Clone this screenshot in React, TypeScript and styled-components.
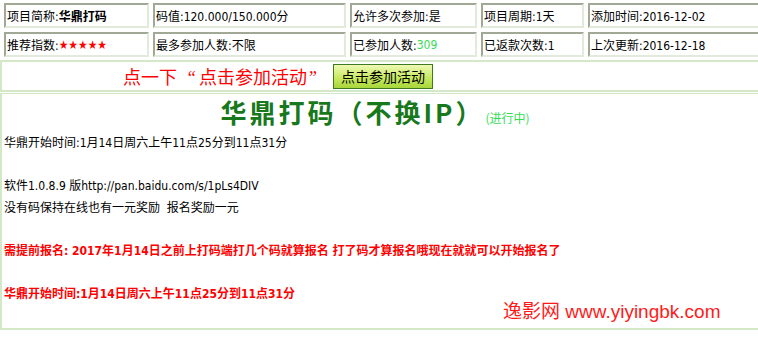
import React from 'react';
import styled, { createGlobalStyle } from 'styled-components';

const v = {
	font: '"DejaVu Sans Condensed", "Liberation Sans", "Noto Sans CJK SC", sans-serif',
	cjk: '"Noto Sans CJK SC", sans-serif',
	red: '#ff0000',
	darkGreen: '#17781c',
	lightGreen: '#33dd55',
	band: '#d3e8c6',
	cellDark: '#a1a996',
	cellLight: '#e2eadb',
};

const GlobalStyle = createGlobalStyle`
	html, body {
		margin: 0;
		padding: 0;
		background: #fff;
		overflow: hidden;
	}
	body {
		font-family: ${v.font};
		font-size: 12px;
		color: #000;
	}
`;

const Page = styled.div`
	position: relative;
	width: 780px;
	height: 338px;
`;

const InfoGrid = styled.div`
	display: grid;
	grid-template-columns: 145px 193px 127px 103px 1fr;
	grid-auto-rows: 25px;
	gap: 4px;
	padding: 3px 0 3px 4px;
	border-bottom: 2px solid ${v.band};
`;

const Cell = styled.div`
	box-sizing: border-box;
	border-top: 2px solid ${v.cellDark};
	border-left: 2px solid ${v.cellDark};
	border-right: 2px solid ${v.cellLight};
	border-bottom: 2px solid ${v.cellLight};
	padding-left: 1px;
	display: flex;
	align-items: center;
	white-space: nowrap;
	overflow: hidden;
`;

const Strong = styled.b`
	font-weight: bold;
`;

const Colored = styled.span<{ $color: string }>`
	color: ${(p) => p.$color};
`;

const ActionRow = styled.div`
	display: flex;
	align-items: center;
	gap: 18px;
	height: 28px;
	padding-left: 121px;
	border-left: 2px solid ${v.band};
	border-bottom: 2px solid ${v.band};
`;

const Prompt = styled.span`
	font-family: ${v.cjk};
	font-size: 18px;
	color: ${v.red};
	white-space: nowrap;
`;

// the quote marks sit in full-width slots, open one pushed right, close one left
const Quote = styled.span<{ $open?: boolean }>`
	display: inline-block;
	width: ${(p) => (p.$open ? '22px' : '8px')};
	text-align: ${(p) => (p.$open ? 'right' : 'left')};
	padding-right: ${(p) => (p.$open ? '3px' : '0')};
	box-sizing: border-box;
	font-family: "Liberation Serif", serif;
	font-style: italic;
`;

const JoinButton = styled.button`
	height: 25px;
	padding: 0 7px;
	font-family: ${v.cjk};
	font-size: 14px;
	color: #000;
	border: 1px solid #3d7a20;
	background: linear-gradient(#eff9b4, #c4e85c 60%, #a8d63a);
	cursor: pointer;
`;

const Content = styled.div`
	margin-top: 1px;
	height: 234px;
	border-top: 1px solid ${v.band};
	border-left: 2px solid ${v.band};
	border-bottom: 2px solid ${v.band};
	padding-left: 2px;
`;

const TitleLine = styled.div`
	display: flex;
	justify-content: center;
	align-items: baseline;
	gap: 1px;
	height: 39px;
	line-height: 36px;
	padding-right: 34px;
`;

const Title = styled.h1`
	margin: 0;
	font-family: ${v.cjk};
	font-size: 26px;
	font-weight: bold;
	letter-spacing: 3px;
	color: ${v.darkGreen};
`;

const Status = styled.span`
	font-family: ${v.cjk};
	font-size: 12px;
	color: ${v.lightGreen};
`;

const Line = styled.div<{ $alert?: boolean }>`
	height: 21.5px;
	line-height: 21.5px;
	white-space: pre;
	color: ${(p) => (p.$alert ? v.red : '#000')};
	font-weight: ${(p) => (p.$alert ? 'bold' : 'normal')};
`;

const Watermark = styled.div`
	position: absolute;
	left: 503px;
	top: 296px;
	font-family: "Liberation Sans", ${v.cjk};
	font-size: 19px;
	color: #ff1a1a;
	white-space: nowrap;
`;

export default function App() {
	return (
		<Page>
			<GlobalStyle />
			<InfoGrid>
				<Cell>
					项目简称:<Strong>华鼎打码</Strong>
				</Cell>
				<Cell>码值:120.000/150.000分</Cell>
				<Cell>允许多次参加:是</Cell>
				<Cell>项目周期:1天</Cell>
				<Cell>添加时间:2016-12-02</Cell>
				<Cell>
					推荐指数:<Colored $color={v.red}>★★★★★</Colored>
				</Cell>
				<Cell>最多参加人数:不限</Cell>
				<Cell>
					已参加人数:<Colored $color={v.lightGreen}>309</Colored>
				</Cell>
				<Cell>已返款次数:1</Cell>
				<Cell>上次更新:2016-12-18</Cell>
			</InfoGrid>
			<ActionRow>
				<Prompt>
					点一下<Quote $open>“</Quote>点击参加活动<Quote>”</Quote>
				</Prompt>
				<JoinButton>点击参加活动</JoinButton>
			</ActionRow>
			<Content>
				<TitleLine>
					<Title>华鼎打码（不换IP）</Title>
					<Status>(进行中)</Status>
				</TitleLine>
				<Line>华鼎开始时间:1月14日周六上午11点25分到11点31分</Line>
				<Line> </Line>
				<Line>软件1.0.8.9 版http://pan.baidu.com/s/1pLs4DIV</Line>
				<Line>没有码保持在线也有一元奖励  报名奖励一元</Line>
				<Line> </Line>
				<Line $alert>需提前报名: 2017年1月14日之前上打码端打几个码就算报名 打了码才算报名哦现在就就可以开始报名了</Line>
				<Line> </Line>
				<Line $alert>华鼎开始时间:1月14日周六上午11点25分到11点31分</Line>
			</Content>
			<Watermark>逸影网 www.yiyingbk.com</Watermark>
		</Page>
	);
}
